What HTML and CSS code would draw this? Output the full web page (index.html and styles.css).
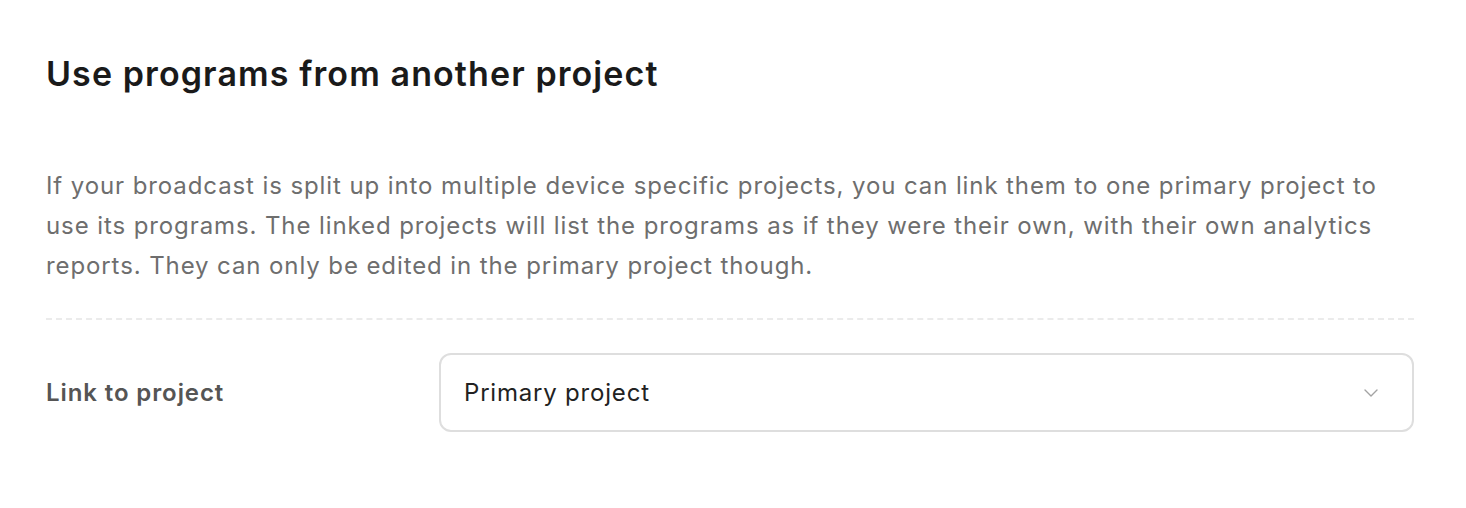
FILE: index.html
```html
<!DOCTYPE html>
<html lang="en">
<head>
    <meta charset="UTF-8">
    <meta name="viewport" content="width=device-width, initial-scale=1.0">
    <title>Linked project settings</title>
    <link rel="stylesheet" href="styles.css">
</head>
<body>
    <div class="section">
        <h2 class="section-title">Use programs from another project</h2>
        <p class="section-text">
            If your broadcast is split up into multiple device specific projects, you can link them to one primary project to
            use its programs. The linked projects will list the programs as if they were their own, with their own analytics
            reports. They can only be edited in the primary project though.
        </p>
        <div class="field-row">
            <label class="field-label" for="link-project">Link to project</label>
            <div class="select-box" id="link-project">
                <span class="select-value">Primary project</span>
                <svg class="select-arrow" width="14" height="8" viewBox="0 0 14 8" fill="none">
                    <path d="M1 1l6 6 6-6" stroke="#a3a3a3" stroke-width="1.4" stroke-linecap="round" stroke-linejoin="round"/>
                </svg>
            </div>
        </div>
    </div>
</body>
</html>
```

FILE: styles.css
```css
* {
    margin: 0;
    padding: 0;
    box-sizing: border-box;
}

body {
    font-family: Inter, "Noto Sans", sans-serif;
    background-color: #fff;
    color: #1a1a1a;
}

.section {
    padding: 52px 52px 0 46px;
}

.section-title {
    font-size: 34px;
    font-weight: 600;
    line-height: 44px;
    color: #1a1a1a;
    letter-spacing: 1.1px;
}

.section-text {
    margin-top: 70px;
    font-size: 24px;
    line-height: 40px;
    letter-spacing: 0.9px;
    color: #6e6e6e;
    padding-bottom: 32px;
    border-bottom: 2px dashed #ebebeb;
}

.field-row {
    display: flex;
    align-items: center;
    margin-top: 33px;
}

.field-label {
    width: 393px;
    font-size: 24px;
    font-weight: 600;
    letter-spacing: 0.9px;
    color: #555;
}

.select-box {
    flex: 1;
    height: 79px;
    display: flex;
    align-items: center;
    justify-content: space-between;
    padding: 0 34px 0 23px;
    border: 2px solid #dedede;
    border-radius: 12px;
    cursor: pointer;
}

.select-value {
    font-size: 24px;
    letter-spacing: 0.8px;
    color: #222;
}
```
